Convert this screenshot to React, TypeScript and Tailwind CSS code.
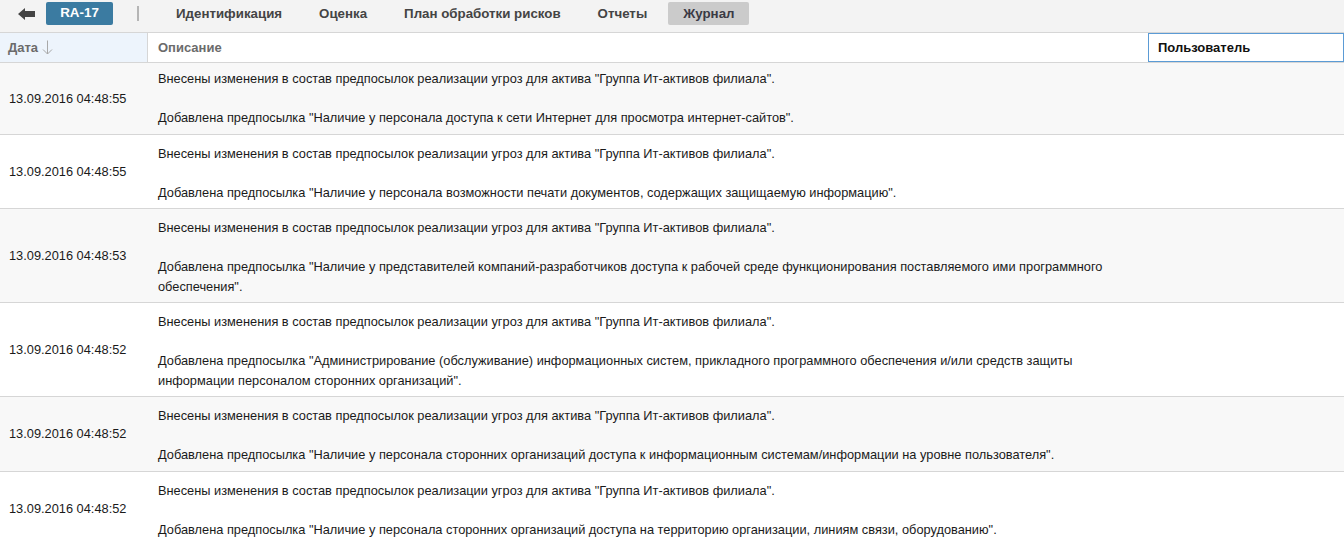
import React from "react";

type Row = { date: string; lines: string[] };

const rows: Row[] = [
  {
    date: "13.09.2016 04:48:55",
    lines: [
      'Добавлена предпосылка "Наличие у персонала доступа к сети Интернет для просмотра интернет-сайтов".',
    ],
  },
  {
    date: "13.09.2016 04:48:55",
    lines: [
      'Добавлена предпосылка "Наличие у персонала возможности печати документов, содержащих защищаемую информацию".',
    ],
  },
  {
    date: "13.09.2016 04:48:53",
    lines: [
      'Добавлена предпосылка "Наличие у представителей компаний-разработчиков доступа к рабочей среде функционирования поставляемого ими программного обеспечения".',
    ],
  },
  {
    date: "13.09.2016 04:48:52",
    lines: [
      'Добавлена предпосылка "Администрирование (обслуживание) информационных систем, прикладного программного обеспечения и/или средств защиты информации персоналом сторонних организаций".',
    ],
  },
  {
    date: "13.09.2016 04:48:52",
    lines: [
      'Добавлена предпосылка "Наличие у персонала сторонних организаций доступа к информационным системам/информации на уровне пользователя".',
    ],
  },
  {
    date: "13.09.2016 04:48:52",
    lines: [
      'Добавлена предпосылка "Наличие у персонала сторонних организаций доступа на территорию организации, линиям связи, оборудованию".',
    ],
  },
];

const first =
  'Внесены изменения в состав предпосылок реализации угроз для актива "Группа Ит-активов филиала".';

export default function App() {
  return (
    <div className="w-[1344px] h-[542px] overflow-hidden bg-white font-['Liberation_Sans',Arial,sans-serif] text-[12.8px] text-[#1a1a1a]">
      {/* Top bar */}
      <div className="h-[33px] bg-[#f3f3f3] border-b border-[#d6d6d6] flex items-start pt-[2px]">
        <div className="w-[46px] h-[23px] flex items-center pl-[18px]">
          <svg width="17" height="12" viewBox="0 0 17 12">
            <path d="M0 6 L7 0 L7 3 L17 3 L17 9 L7 9 L7 12 Z" fill="#444" />
          </svg>
        </div>
        <div className="w-[67px] h-[23px] rounded-[2px] bg-[#3b7ba1] text-white font-bold text-[13.4px] flex items-center justify-center">
          RA-17
        </div>
        <div className="ml-[24px] mt-[4px] w-[2px] h-[15px] bg-[#b5b5b5]" />
        <div className="flex ml-[18px] text-[13.3px] font-bold text-[#444]">
          <div className="h-[23px] px-[19px] flex items-center">Идентификация</div>
          <div className="h-[23px] px-[18px] flex items-center">Оценка</div>
          <div className="h-[23px] px-[19px] flex items-center">План обработки рисков</div>
          <div className="h-[23px] px-[18px] flex items-center">Отчеты</div>
          <div className="h-[23px] ml-[3px] px-[15px] rounded-[2px] bg-[#cbcbcb] flex items-center text-[#3a3a44]">
            Журнал
          </div>
        </div>
      </div>

      {/* Header */}
      <div className="h-[30px] flex border-b border-[#d6d6d6] text-[13px]">
        <div className="w-[148px] bg-[#edf4fc] border-r border-[#d6d6d6] flex items-center pl-[8px] font-bold text-[#6b6b6b]">
          Дата
          <svg className="ml-[4px]" width="11" height="15" viewBox="0 0 11 15">
            <path d="M5.5 0.5 V14 M1 9.5 L5.5 14 L10 9.5" stroke="#a8a8a8" strokeWidth="1" fill="none" />
          </svg>
        </div>
        <div className="w-[1000px] flex items-center pl-[10px] font-bold text-[#6b6b6b]">
          Описание
        </div>
        <div className="flex-1 border border-[#5b9bd5] flex items-center pl-[9px] font-bold text-[#111]">
          Пользователь
        </div>
      </div>

      {/* Rows */}
      {rows.map((r, i) => (
        <div
          key={i}
          className={`flex border-b border-[#d6d6d6] ${i % 2 === 0 ? "bg-[#f8f8f8]" : "bg-white"}`}
        >
          <div className="w-[148px] flex items-center pl-[9px]">{r.date}</div>
          <div
            className={`w-[1000px] pl-[10px] pr-[10px] leading-[19.5px] pb-[6px] ${i === 0 ? "pt-[6px]" : "pt-[9px]"}`}
          >
            <div>{first}</div>
            <div className="h-[19.5px]" />
            {r.lines.map((l, j) => (
              <div key={j}>{l}</div>
            ))}
          </div>
          <div className="flex-1" />
        </div>
      ))}
    </div>
  );
}
